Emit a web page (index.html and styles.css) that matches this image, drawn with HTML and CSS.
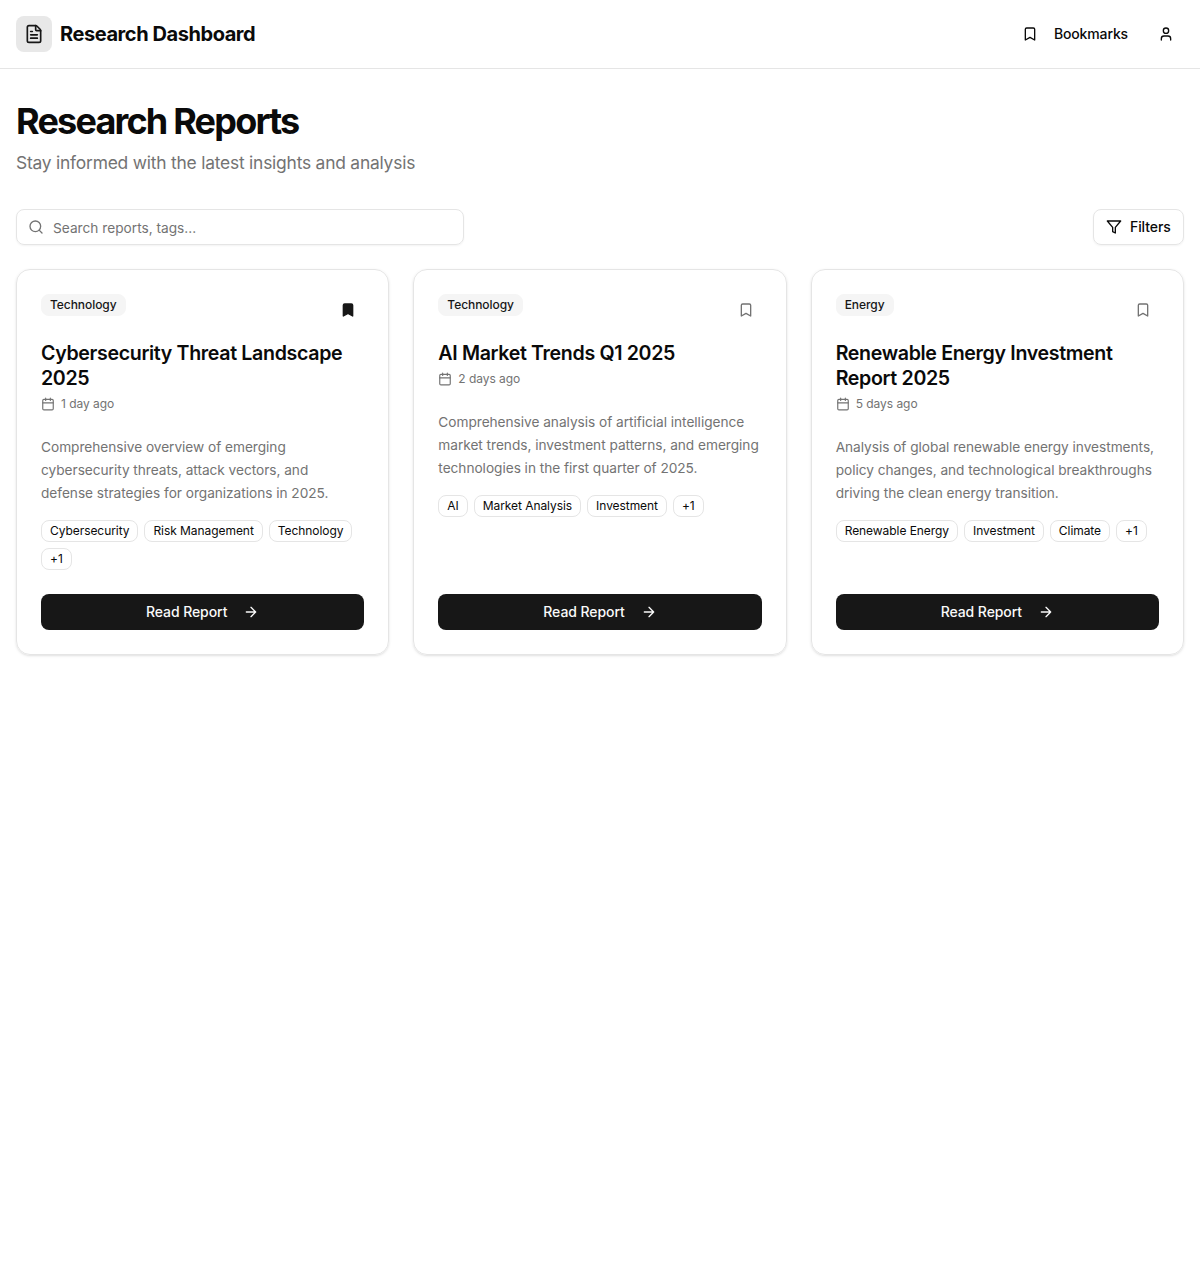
FILE: index.html
```
<!DOCTYPE html>
<html lang="en">
<head>
<meta charset="utf-8">
<title>Research Dashboard</title>
<link rel="stylesheet" href="styles.css">
</head>
<body>
<svg class="sprite" aria-hidden="true">
  <symbol id="bookmark" viewBox="0 0 24 24"><path d="m19 21-7-4-7 4V5a2 2 0 0 1 2-2h10a2 2 0 0 1 2 2v16z"/></symbol>
  <symbol id="calendar" viewBox="0 0 24 24"><path d="M8 2v4M16 2v4M3 10h18"/><rect width="18" height="18" x="3" y="4" rx="2"/></symbol>
  <symbol id="arrow" viewBox="0 0 24 24"><path d="M5 12h14M12 5l7 7-7 7"/></symbol>
</svg>
<header class="topbar">
  <div class="brand">
    <span class="logo"><svg class="icon icon-lg" viewBox="0 0 24 24"><path d="M6 22a2 2 0 0 1-2-2V4a2 2 0 0 1 2-2h8a2.4 2.4 0 0 1 1.704.706l3.588 3.588A2.4 2.4 0 0 1 20 8v12a2 2 0 0 1-2 2z"/><path d="M14 2v5a1 1 0 0 0 1 1h5M10 9H8M16 13H8M16 17H8"/></svg></span>
    <span class="brand-name">Research Dashboard</span>
  </div>
  <nav class="nav">
    <button class="nav-button"><svg class="icon"><use href="#bookmark"/></svg><span>Bookmarks</span></button>
    <button class="user-button" aria-label="Account"><svg class="icon" viewBox="0 0 24 24"><circle cx="12" cy="7" r="4"/><path d="M19 21v-2a4 4 0 0 0-4-4H9a4 4 0 0 0-4 4v2"/></svg></button>
  </nav>
</header>
<main class="page">
  <h1>Research Reports</h1>
  <p class="lead">Stay informed with the latest insights and analysis</p>
  <div class="toolbar">
    <label class="search"><svg class="icon" viewBox="0 0 24 24"><circle cx="11" cy="11" r="8"/><path d="m21 21-4.3-4.3"/></svg><input type="text" placeholder="Search reports, tags..."></label>
    <button class="filters"><svg class="icon" viewBox="0 0 24 24"><path d="M22 3H2l8 9.46V19l4 2v-8.54z"/></svg><span>Filters</span></button>
  </div>
  <section class="cards">
    <article class="card">
      <div class="card-top"><span class="badge">Technology</span><button class="save saved" aria-label="Remove bookmark"><svg class="icon"><use href="#bookmark"/></svg></button></div>
      <h2>Cybersecurity Threat Landscape 2025</h2>
      <div class="date"><svg class="icon icon-sm"><use href="#calendar"/></svg><span>1 day ago</span></div>
      <p class="summary">Comprehensive overview of emerging cybersecurity threats, attack vectors, and<br>defense strategies for organizations in 2025.</p>
      <div class="tags"><span class="tag">Cybersecurity</span><span class="tag">Risk Management</span><span class="tag">Technology</span><span class="tag">+1</span></div>
      <button class="read"><span>Read Report</span><svg class="icon"><use href="#arrow"/></svg></button>
    </article>
    <article class="card">
      <div class="card-top"><span class="badge">Technology</span><button class="save" aria-label="Bookmark"><svg class="icon"><use href="#bookmark"/></svg></button></div>
      <h2>AI Market Trends Q1 2025</h2>
      <div class="date"><svg class="icon icon-sm"><use href="#calendar"/></svg><span>2 days ago</span></div>
      <p class="summary">Comprehensive analysis of artificial intelligence market trends, investment patterns, and emerging technologies in the first quarter of 2025.</p>
      <div class="tags"><span class="tag">AI</span><span class="tag">Market Analysis</span><span class="tag">Investment</span><span class="tag">+1</span></div>
      <button class="read"><span>Read Report</span><svg class="icon"><use href="#arrow"/></svg></button>
    </article>
    <article class="card">
      <div class="card-top"><span class="badge">Energy</span><button class="save" aria-label="Bookmark"><svg class="icon"><use href="#bookmark"/></svg></button></div>
      <h2>Renewable Energy Investment Report 2025</h2>
      <div class="date"><svg class="icon icon-sm"><use href="#calendar"/></svg><span>5 days ago</span></div>
      <p class="summary">Analysis of global renewable energy investments, policy changes, and technological breakthroughs driving the clean energy transition.</p>
      <div class="tags"><span class="tag">Renewable Energy</span><span class="tag">Investment</span><span class="tag">Climate</span><span class="tag">+1</span></div>
      <button class="read"><span>Read Report</span><svg class="icon"><use href="#arrow"/></svg></button>
    </article>
  </section>
</main>
</body>
</html>
```
FILE: styles.css
```
* { box-sizing: border-box; margin: 0; }
body { background: #fff; color: #0a0a0a; font-family: Inter, "Liberation Sans", sans-serif; font-size: 14px; line-height: 20px; }
button, input { font: inherit; color: inherit; border: 0; padding: 0; background: none; letter-spacing: inherit; }
.sprite { display: none; }
.icon { width: 16px; height: 16px; flex: none; fill: none; stroke: currentColor; stroke-width: 2; stroke-linecap: round; stroke-linejoin: round; }
.icon-lg { width: 20px; height: 20px; }
.icon-sm { width: 14px; height: 14px; }

.topbar { height: 69px; padding: 0 16px; display: flex; align-items: center; justify-content: space-between; border-bottom: 1px solid #e5e5e5; }
.brand { display: flex; align-items: center; gap: 8px; }
.logo { width: 36px; height: 36px; display: flex; align-items: center; justify-content: center; border-radius: 8px; background: #e8e8e8; color: #171717; }
.brand-name { font-size: 20px; line-height: 28px; font-weight: 700; letter-spacing: -0.43px; }
.nav { display: flex; gap: 8px; }
.nav-button { height: 36px; padding: 0 12px; display: flex; align-items: center; gap: 16px; font-weight: 500; letter-spacing: -0.14px; }
.user-button { width: 36px; height: 36px; display: flex; align-items: center; justify-content: center; }

.page { padding: 32px 16px; }
h1 { font-size: 36px; line-height: 40px; font-weight: 700; letter-spacing: -1.8px; }
.lead { margin-top: 8px; font-size: 17.4px; line-height: 28px; color: #737373; letter-spacing: -0.21px; }
.toolbar { margin-top: 32px; display: flex; justify-content: space-between; }
.search { width: 448px; height: 36px; padding: 0 12px 0 11px; display: flex; align-items: center; gap: 9px; border: 1px solid #e5e5e5; border-radius: 8px; color: #737373; box-shadow: 0 1px 2px rgba(0, 0, 0, .05); }
.search input { flex: 1; min-width: 0; height: 20px; padding-top: 1px; outline: 0; font-size: 13.7px; }
.search input::placeholder { color: #737373; opacity: 1; }
.filters { width: 91px; height: 36px; padding: 0 12px; display: flex; align-items: center; gap: 8px; border: 1px solid #e5e5e5; border-radius: 8px; font-weight: 500; letter-spacing: -0.08px; box-shadow: 0 1px 2px rgba(0, 0, 0, .05); }

.cards { margin-top: 24px; display: grid; grid-template-columns: repeat(3, 1fr); gap: 24px; }
.card { padding: 24px; display: flex; flex-direction: column; border: 1px solid #e5e5e5; border-radius: 14px; box-shadow: 0 1px 3px rgba(0, 0, 0, .1), 0 1px 2px -1px rgba(0, 0, 0, .1); }
.card-top { display: flex; align-items: flex-start; justify-content: space-between; }
.badge, .tag { height: 22px; padding: 2px 8px; border: 1px solid #e5e5e5; border-radius: 8px; font-size: 12px; line-height: 16px; letter-spacing: -0.06px; }
.badge { background: #f5f5f5; border-color: #f5f5f5; color: #171717; font-weight: 500; letter-spacing: -0.06px; }
.save { width: 32px; height: 32px; display: flex; align-items: center; justify-content: center; color: #737373; }
.saved { color: #171717; }
.saved .icon { fill: currentColor; }
h2 { margin-top: 15px; font-size: 19.6px; line-height: 25px; font-weight: 600; letter-spacing: -0.34px; }
.date { margin-top: 5px; display: flex; align-items: center; gap: 6px; font-size: 12px; line-height: 16px; color: #737373; letter-spacing: -0.04px; }
.summary { margin-top: 24px; font-size: 13.7px; line-height: 22.75px; color: #737373; letter-spacing: -0.04px; }
.tags { margin: 16px 0 24px; display: flex; flex-wrap: wrap; gap: 6px; }
.read { margin-top: auto; height: 36px; display: flex; flex: none; align-items: center; justify-content: center; gap: 16px; border-radius: 8px; background: #171717; color: #fafafa; font-weight: 500; letter-spacing: -0.08px; }
```
